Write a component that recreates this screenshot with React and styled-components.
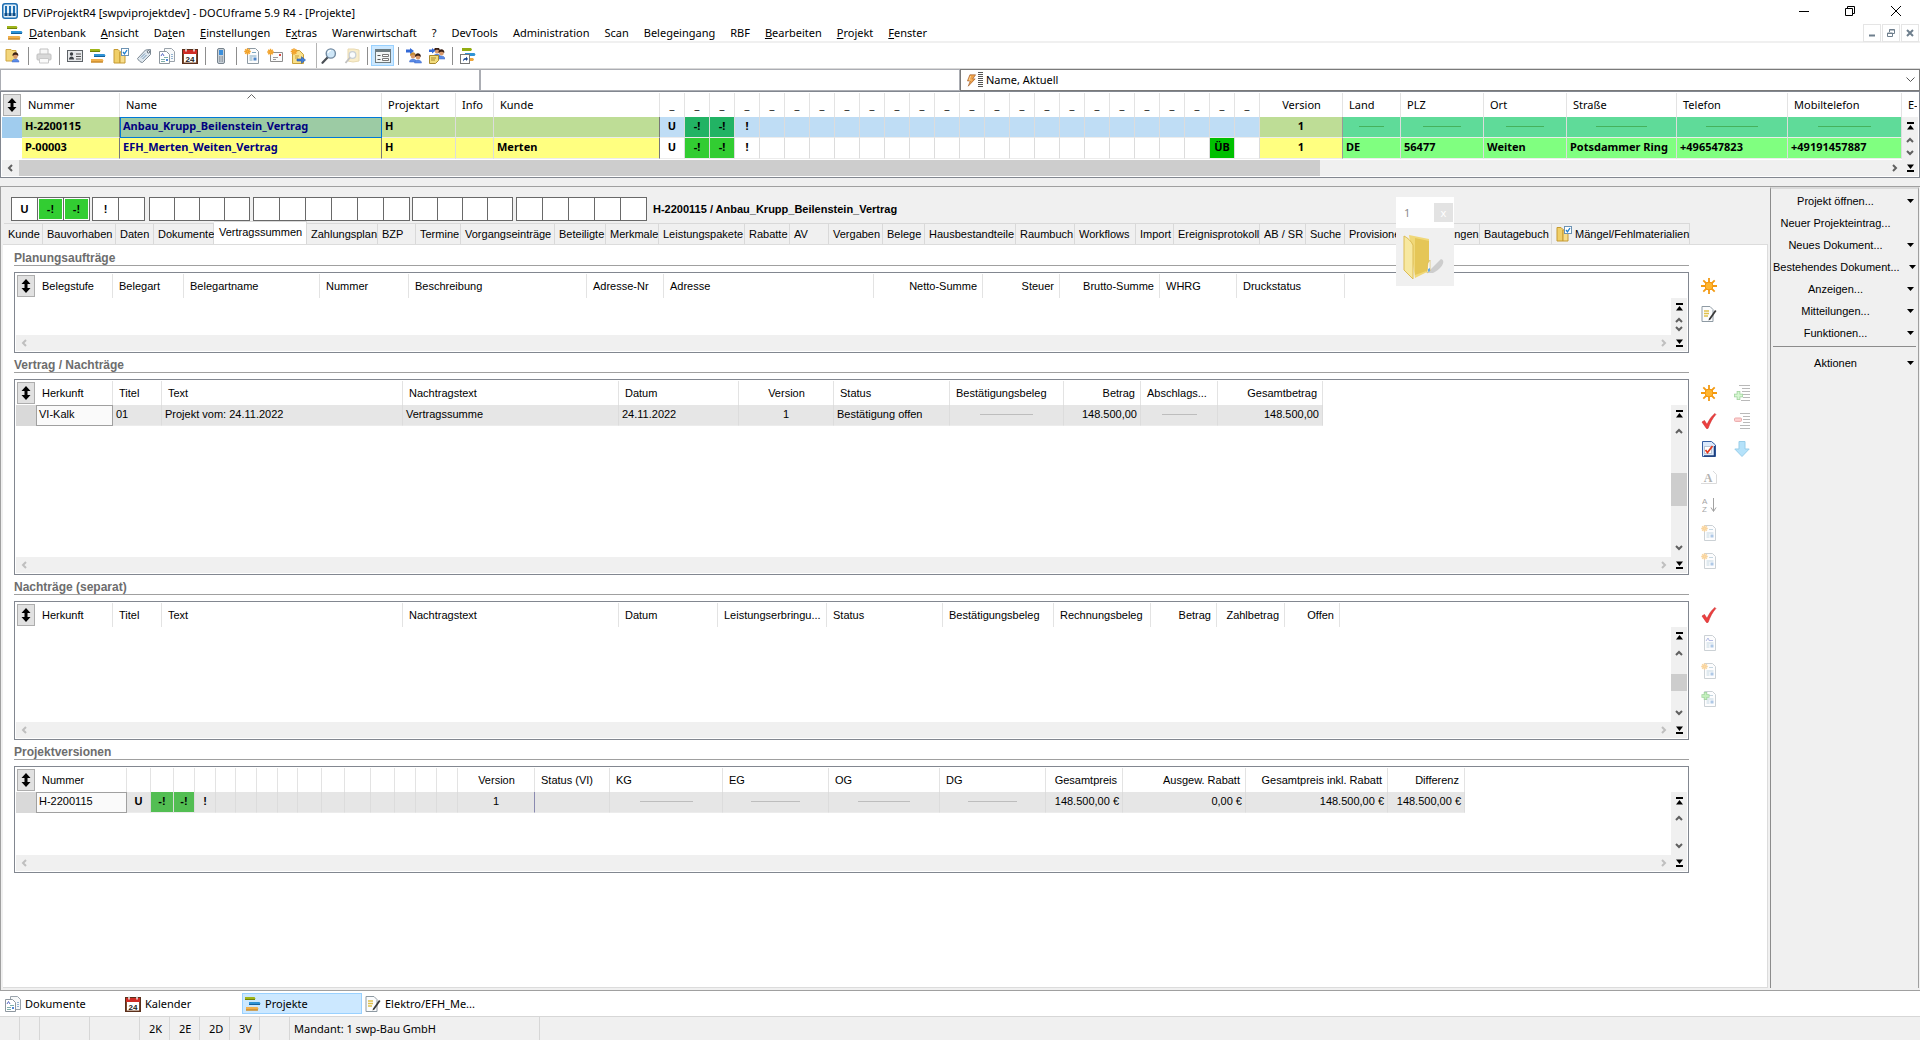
import React from 'react';
import styled, { createGlobalStyle, css } from 'styled-components';

const GlobalStyle = createGlobalStyle`
  * {
    box-sizing: border-box;
  }
  body {
    margin: 0;
    background-color: #f0f0f0;
    color: #000;
    font-family: 'Noto Sans', 'Open Sans', sans-serif;
    font-size: 11px;
    line-height: 16px;
  }
  button,
  input,
  select {
    font: inherit;
    color: inherit;
    margin: 0;
    padding: 0;
    border: none;
    border-radius: 0;
    background: none;
  }
  a {
    color: inherit;
    text-decoration: none;
  }
  svg {
    display: block;
    flex: none;
  }
`;

/* ---------- icons ---------- */

const Svg = ({ size = 16, faded, children }) => (
  <svg
    width={size}
    height={size}
    viewBox='0 0 16 16'
    fill='none'
    opacity={faded ? 0.45 : 1}
    aria-hidden='true'
  >
    {children}
  </svg>
);

const Page = ({ x = 2, y = 0.5, w = 11, h = 15 }) => (
  <path
    d={`M${x} ${y}h${w - 3}l3 3v${h - 3}h-${w}z`}
    fill='#fbfcfd'
    stroke='#8e9aa3'
  />
);

const Burst = ({ x = 4, y = 4, r = 4 }) => (
  <g stroke='#f2a32c' strokeWidth='1.4'>
    <path
      d={`M${x - r} ${y}h${r * 2}M${x} ${y - r}v${r * 2}M${x - r * 0.7} ${
        y - r * 0.7
      }l${r * 1.4} ${r * 1.4}M${x - r * 0.7} ${y + r * 0.7}l${r * 1.4} ${
        -r * 1.4
      }`}
    />
    <circle cx={x} cy={y} r={r * 0.35} fill='#ffc24a' />
  </g>
);

const Person = ({ x, y, hair = '#3a1f14' }) => (
  <g>
    <path
      d={`M${x - 3.5} ${y + 7}c0-4 7-4 7 0z`}
      fill='#5a8be8'
      stroke='#3b67c4'
      strokeWidth='.5'
    />
    <circle cx={x} cy={y + 1} r='2.4' fill='#d99a6c' />
    <path d={`M${x - 3} ${y + 1}c-.5-5 6.5-5 5.8 0-2-1.5-3-2-5.8 0z`} fill={hair} />
  </g>
);

const icons = {
  app: (
    <>
      <rect x='0' y='0' width='16' height='16' rx='3' fill='#1f6fb2' />
      <rect x='1.5' y='1.5' width='13' height='13' rx='1.5' fill='#e3f0f9' />
      <path d='M4 3v8M8 3v8M12 3v8' stroke='#1f6fb2' strokeWidth='2' />
      <path d='M4 10v3M8 10v3M12 10v3' stroke='#0d4c86' strokeWidth='3' />
    </>
  ),
  bars: (
    <>
      <path d='M0 1h9.5l1 1.5-1 1.5H0z' fill='#9fb51a' />
      <path d='M0 3.5h10' stroke='#6f8208' />
      <path d='M4 6h10.500l1 1.500-1 1.500H4z' fill='#2f93d6' />
      <path d='M4 8.500h11' stroke='#12619c' />
      <path d='M1 11h11.500l1 1.500-1 2H1z' fill='#f0b04c' />
      <path d='M1 14h12' stroke='#b97a1c' />
    </>
  ),
  userFolder: (
    <>
      <path d='M1 1.500h5l1 1h4V13H1z' fill='#f3d67c' stroke='#cfa640' />
      <Person x={10.5} y={7} />
    </>
  ),
  printer: (
    <>
      <path d='M4 6V1h8v5' fill='#eee' stroke='#777' />
      <rect x='1' y='6' width='14' height='6' rx='1' fill='#aaa' stroke='#777' />
      <path d='M3.500 10.500h9V15h-9z' fill='#f4f4f4' stroke='#888' />
    </>
  ),
  card: (
    <>
      <rect x='.5' y='2.500' width='15' height='11' fill='#e6e8ea' stroke='#5c6166' />
      <circle cx='4.500' cy='6' r='1.700' fill='#3c4045' />
      <path d='M2 11.500c0-4 5-4 5 0z' fill='#3c4045' />
      <path d='M9 6h5M9 8.500h5M9 11h5' stroke='#555' />
    </>
  ),
  folderCheck: (
    <>
      <path d='M1 1.500h4l2 2V15H1z' fill='#f0cf68' stroke='#c59a32' />
      <path d='M7 4h5v11H7z' fill='#f7dd8c' stroke='#c59a32' />
      <rect x='8.500' y='.5' width='7' height='7' fill='#fff' stroke='#6d93b3' />
      <path d='M10 4l1.500 1.800L14 2' stroke='#1e7fd0' strokeWidth='1.300' />
    </>
  ),
  tag: (
    <>
      <path d='M1.500 10.500l8-8.500 5-.5v5l-8 8c-2 0-4-2-5-4z' fill='#dfe7ee' stroke='#7c8994' />
      <circle cx='12.500' cy='3.800' r='1.200' fill='#fff' stroke='#596672' />
      <path d='M5 9.500l4-4M6.500 11l4-4' stroke='#6f95b5' />
    </>
  ),
  docs: (
    <>
      <path d='M5.500.5h7l3 3v10h-10z' fill='#f7f9fa' stroke='#9aa3ab' />
      <path d='M.5 3.500h7l3 3v9h-10z' fill='#fff' stroke='#8e979f' />
      <path d='M2 8l1.500-2.500L5 8' stroke='#5a6bc4' />
      <path d='M5 9.500h4M2 11.500h4M2 13.500h4' stroke='#7fb0ac' />
      <path d='M7 11h2v2H7z' fill='#4f86d9' />
      <path d='M12 6.500h2M12 8.500h2M12 10.500h2' stroke='#94b4d2' />
    </>
  ),
  calendar: (
    <>
      <rect x='.5' y='1.500' width='15' height='14' fill='#7b4a2d' stroke='#5a2f1b' />
      <rect x='2' y='6' width='12' height='8.500' fill='#fff' />
      <path d='M1 2h14v4H1z' fill='#cf2c25' />
      <path d='M4 0v3.500M12 0v3.500' stroke='#eee' strokeWidth='1.500' />
      <text x='8' y='13.500' textAnchor='middle' fontFamily='Liberation Sans, sans-serif' fontSize='8' fontWeight='700' fill='#222'>
        24
      </text>
    </>
  ),
  phone: (
    <>
      <rect x='4.500' y='.5' width='7' height='15' rx='1.500' fill='#c9d1d8' stroke='#76828c' />
      <rect x='6' y='2' width='4' height='5' fill='#3c8fdc' />
      <path d='M6 9h4M6 11h4M6 13h4' stroke='#6d7780' strokeDasharray='1 .5' />
    </>
  ),
  newDoc: (
    <>
      <Page x={3.5} />
      <path d='M8 4.500h4M5.500 8h7M5.500 10h3M5.500 12h3' stroke='#7fa8c0' />
      <path d='M9.500 9.500h3v3h-3z' fill='#4d86c9' />
      <Burst x={3.5} y={3.5} r={3.3} />
    </>
  ),
  letterDoc: (
    <>
      <Page x={3.5} />
      <path d='M5 6l2-3 1.500 3M8 5.500h4' stroke='#5a6bc4' />
      <path d='M5.500 8h7M5.500 10h3M5.500 12h3' stroke='#7fa8c0' />
      <path d='M9.500 9.500h3v3h-3z' fill='#4d86c9' />
    </>
  ),
  plusDoc: (
    <>
      <Page x={3.5} />
      <path d='M8 4.500h4M5.500 8h7M5.500 10h3M5.500 12h3' stroke='#7fa8c0' />
      <path d='M9.500 9.500h3v3h-3z' fill='#4d86c9' />
      <path d='M4.500 1v8M.5 5h8' stroke='#2f9c2c' strokeWidth='3.400' />
      <path d='M4.500 1.700v6.600M1.200 5h6.600' stroke='#7be06f' strokeWidth='1.800' />
    </>
  ),
  newMail: (
    <>
      <path d='M3.500 4.500h12v9h-12z' fill='#fbfbfb' stroke='#8d8d8d' />
      <path d='M6 9.500h5M6 11.500h3' stroke='#9a9a9a' />
      <path d='M12 6h2v2h-2z' fill='#d9473f' />
      <Burst x={3.5} y={4} r={3.3} />
    </>
  ),
  noteArrow: (
    <>
      <path d='M2.500 2.500h7l4 4v9h-11z' fill='#f9e08a' stroke='#c9a13a' />
      <path d='M5 8h4M5 10h3' stroke='#c9a13a' />
      <path d='M7 11h4.500V8.700L15.500 12l-4 3.300V13H7z' fill='#3f7fd8' stroke='#2356a5' strokeWidth='.6' />
      <Burst x={4} y={3.5} r={3.3} />
    </>
  ),
  magnifier: (
    <>
      <path d='M1.500 14.800l5-5.300' stroke='#4a4f55' strokeWidth='2.200' strokeLinecap='round' />
      <circle cx='9.800' cy='5.500' r='4.600' fill='#cfe7f8' stroke='#7189a0' strokeWidth='1.400' />
      <path d='M7 5a3 3 0 013-2.500' stroke='#fff' strokeWidth='1.200' />
    </>
  ),
  folderSearch: (
    <>
      <path d='M4 1h6l5 1v11l-6 1-5-1z' fill='#f3d98b' stroke='#cfae54' />
      <circle cx='8.500' cy='7' r='3.300' fill='#f5f9fc' stroke='#8a98a5' strokeWidth='1.300' />
      <path d='M6 9.500L1.500 15' stroke='#777' strokeWidth='1.800' />
    </>
  ),
  form: (
    <>
      <rect x='.5' y='1.500' width='15' height='13' fill='#f2f5f5' stroke='#6d7b80' />
      <path d='M1 3h14' stroke='#6d7b80' strokeWidth='2' />
      <path d='M2.500 7.500h3M2.500 11.500h3' stroke='#555' />
      <path d='M7.500 6.500h6v2h-6zM7.500 10.500h6v2h-6z' fill='#fff' stroke='#777' />
    </>
  ),
  usersArrow: (
    <>
      <Person x={7} y={7} hair='#c48b36' />
      <Person x={12} y={8} />
      <path d='M0 1.500h4V0l4 3-4 3V4.500H0z' fill='#3268d6' />
    </>
  ),
  usersNote: (
    <>
      <Person x={8} y={2} />
      <Person x={12.5} y={4} />
      <path d='M.5 7.500h9v5l-3 3h-6z' fill='#f2dc7c' stroke='#a8892e' />
      <path d='M2 10h5M2 12h4' stroke='#a8892e' />
      <path d='M0 1.500h3V0l3.500 2.700L3 5.500V4H0z' fill='#3268d6' />
    </>
  ),
  shortcut: (
    <>
      <path d='M2 0h9l1 1.500-1 1.500H2z' fill='#93ad12' />
      <path d='M5 5h9.500l1 1.500-1 1.500H5z' fill='#2f93d6' />
      <path d='M8 10h5l1 1.500-1 1.500H8z' fill='#eda63c' />
      <rect x='.5' y='6.500' width='9' height='9' fill='#fff' stroke='#777' />
      <path d='M3 13.500c0-2.500 1-3.500 3-3.500V8.500L8 11l-2 2v-1.300c-1.300 0-2.300.3-3 1.800z' fill='#123f8a' />
    </>
  ),
  bolt: (
    <>
      <path d='M6 1h7L9.500 6h3L4 15l2.500-6.500H3z' fill='#f0a24a' stroke='#9c5a2a' strokeWidth='.8' />
      <path d='M7 2.500L5 7.500h3' stroke='#ffe2a8' />
    </>
  ),
  sun: (
    <>
      <path d='M8 0v16M0 8h16M2.300 2.300l11.400 11.400M2.300 13.700L13.700 2.300' stroke='#f39a12' strokeWidth='1.800' />
      <circle cx='8' cy='8' r='4' fill='#ffb52e' stroke='#f08c00' strokeWidth='.8' />
    </>
  ),
  noteEdit: (
    <>
      <Page x={1} w={11} />
      <path d='M3 5h5M3 7.500h5M3 10h4' stroke='#e0c04a' strokeWidth='1.600' />
      <path d='M8 12.500L14 4l1.500 1-6 8.500-2 1z' fill='#3a3a3a' />
    </>
  ),
  check: (
    <path d='M1 9l2.500-1.500L6 11.500C8 7 10.500 3 14 .5l.8 1C11.500 5 9 10 7 15.500H5.500z' fill='#ee3f3f' stroke='#c92a2a' strokeWidth='.6' />
  ),
  docCheck: (
    <>
      <path d='M1.500.5h9l4 3.500v11.500h-13z' fill='#dbe9fb' stroke='#355fa3' />
      <path d='M13.500 5v10H3' stroke='#1d3f7c' strokeWidth='1.500' />
      <rect x='3.500' y='5.500' width='7' height='7' fill='#fff' stroke='#b9c6d6' />
      <path d='M4.500 9l2 2.500L11.500 5' stroke='#e33a1f' strokeWidth='1.700' />
    </>
  ),
  textDoc: (
    <>
      <path d='M0 14.500h15.500v-9L12 2' stroke='#b0b0b0' />
      <text x='7' y='12.500' textAnchor='middle' fontFamily='Liberation Serif, serif' fontSize='12' fontWeight='700' fill='#555'>
        A
      </text>
    </>
  ),
  sort: (
    <>
      <text x='1' y='7' fontFamily='Liberation Sans, sans-serif' fontSize='8' fill='#333'>
        A
      </text>
      <text x='1' y='15' fontFamily='Liberation Sans, sans-serif' fontSize='8' fill='#333'>
        Z
      </text>
      <path d='M12.500 1v13M10 10.500l2.500 4 2.500-4' stroke='#333' />
    </>
  ),
  listPlus: (
    <>
      <path d='M5 .5h11M8 3.500h8M8 6.500h8M9 9.500h7M9 12.500h7M7 15.500h9' stroke='#666' />
      <path d='M4.500 6v9M0 10.500h9' stroke='#2f9c2c' strokeWidth='3.600' />
      <path d='M4.500 6.700v7.600M.7 10.500h7.600' stroke='#a6f09a' strokeWidth='2' />
    </>
  ),
  listMinus: (
    <>
      <path d='M6 .5h10M9 3.500h7M9 6.500h7M9 9.500h7M6 12.500h10M6 15.500h10' stroke='#666' />
      <rect x='.5' y='5' width='7' height='3.400' rx='1' fill='#ff9a9a' stroke='#d24747' />
    </>
  ),
  arrowDown: (
    <path d='M5 .5h6V8h4.200L8 15.500.8 8H5z' fill='#5cc0f5' stroke='#1e93d0' />
  ),
};

const Icon = ({ name, size, faded }) => (
  <Svg size={size} faded={faded}>
    {icons[name]}
  </Svg>
);

const Chevron = ({ dir = 'down', color = '#606060' }) => {
  const paths = {
    up: 'M2 7l3-3 3 3',
    down: 'M2 3l3 3 3-3',
    left: 'M6 2L3 5l3 3',
    right: 'M4 2l3 3-3 3',
  };
  return (
    <svg width='10' height='10' viewBox='0 0 10 10' fill='none' aria-hidden='true'>
      <path d={paths[dir]} stroke={color} strokeWidth='2' />
    </svg>
  );
};

const EdgeArrow = ({ dir }) => (
  <svg width='8' height='8' viewBox='0 0 8 8' aria-hidden='true'>
    {dir === 'up' ? (
      <path d='M1 0h7v2H1zM4.500 3L8 7.500H1z' />
    ) : (
      <path d='M1 6h7v2H1zM4.500 5L1 .5h7z' />
    )}
  </svg>
);

const BigFolder = () => (
  <svg width='44' height='46' viewBox='0 0 44 46' aria-hidden='true'>
    <path d='M24 40l14-14c6 2-1 11-8 14z' fill='#bdbdbd' opacity='.7' />
    <path d='M6 2l20 4v32l-14 7z' fill='#f0d878' />
    <path d='M12 5l14 3v29l-14 5z' fill='#e5c657' />
    <path d='M1 3c4 2 7 5 9 9v34L1 37z' fill='#f7e8a0' stroke='#dcbc55' />
    <path d='M25 30l2-3v11l-3 2z' fill='#fff' stroke='#d3b44c' strokeWidth='.6' />
    <path d='M25 36l2-1v3l-2 1z' fill='#62a9ea' />
  </svg>
);

/* ---------- window frame ---------- */

const Window = styled.div`
  min-height: 100vh;
  display: flex;
  flex-direction: column;
`;

const TitleBar = styled.header`
  display: flex;
  align-items: center;
  height: 24px;
  padding: 0 1px 2px 2px;
  gap: 5px;
  background-color: #fff;
`;

const TitleText = styled.h1`
  flex: 1;
  margin: 0;
  padding-top: 3px;
  font-size: 11px;
  font-weight: 400;
`;

const WindowButtons = styled.div`
  display: flex;
`;

const WindowButton = styled.button`
  width: 46px;
  height: 22px;
  display: flex;
  align-items: center;
  justify-content: center;
`;

const MenuBar = styled.nav`
  display: flex;
  align-items: center;
  height: 19px;
  padding-left: 7px;
  background-color: #fff;
  border-bottom: 2px solid #f0f0f0;
`;

const MenuList = styled.div`
  flex: 1;
  display: flex;
  gap: 15px;
  padding-left: 6px;
`;

const ChildButton = styled.button`
  width: 18px;
  height: 18px;
  margin-right: 1px;
  display: flex;
  align-items: center;
  justify-content: center;
  border: 1px solid #e5e5e5;
`;

const Toolbar = styled.div`
  display: flex;
  align-items: center;
  height: 26px;
  padding-left: 1px;
  background-color: #fff;
  border-bottom: 1px solid #d9d9d9;
`;

const ToolButton = styled.button`
  width: 23px;
  height: 21px;
  display: flex;
  align-items: center;
  justify-content: center;
  ${(props) =>
    props.$active &&
    css`
      background-color: #cce8ff;
      border: 1px solid #99d1ff;
    `}
`;

const ToolSeparator = styled.span`
  width: 8px;
  height: ${(props) => (props.$full ? '25px' : '18px')};
  display: flex;
  justify-content: ${(props) => (props.$full ? 'flex-end' : 'center')};
  &::before {
    content: '';
    border-left: 1px solid ${(props) => (props.$full ? '#b4b4b4' : '#8d8d8d')};
  }
`;

const SearchRow = styled.div`
  display: grid;
  grid-template-columns: 1fr 1fr 2fr;
`;

const SearchInput = styled.input`
  height: 22px;
  min-width: 0;
  padding: 0 4px;
  background-color: #fff;
  border: 1px solid #abadb3;
`;

const SortBox = styled.div`
  display: flex;
  align-items: center;
  height: 22px;
  padding: 0 4px;
  background-color: #fff;
  border: 1px solid #7a7a7a;
  select {
    flex: 1;
    appearance: none;
    outline: none;
    padding-left: 3px;
  }
`;

const Grip = styled.span`
  width: 5px;
  height: 16px;
  background: repeating-linear-gradient(#555 0 1px, #fff 1px 2px);
`;

/* ---------- list grid ---------- */

const GridFrame = styled.div`
  display: grid;
  grid-template-columns: minmax(0, 1fr) 16px;
  grid-template-rows: 24px ${(props) => props.$body}px 16px;
  padding: 1px;
  background-color: #fff;
  border: 1px solid #828790;
`;

const GridTable = styled.table`
  grid-area: 1 / 1 / 3 / 3;
  align-self: start;
  width: 100%;
  table-layout: fixed;
  border-collapse: separate;
  border-spacing: 0;
  font-family: ${(props) =>
    props.$large ? "'Noto Sans', sans-serif" : "'Liberation Sans', sans-serif"};
  font-size: 11px;
`;

const Th = styled.th`
  position: relative;
  height: 24px;
  padding: 0 5px 0 6px;
  overflow: hidden;
  white-space: nowrap;
  font-weight: 400;
  text-align: ${(props) => props.$align || 'left'};
  border-right: 1px solid ${(props) => (props.$bare ? 'transparent' : '#e3e3e3')};
`;

const FlagTh = styled(Th)`
  padding: 0;
  text-align: center;
`;

const SelectorTh = styled.th`
  padding: 0 0 0 1px;
`;

const SelectorButton = styled.button`
  width: 18px;
  height: 22px;
  display: flex;
  align-items: center;
  justify-content: center;
  background-color: #e1e1e1;
  border: 1px solid #adadad;
`;

const SortCaret = styled.svg`
  position: absolute;
  top: 1px;
  left: calc(50% - 4px);
`;

const Td = styled.td`
  height: 21px;
  padding: 0 3px 2px;
  overflow: hidden;
  white-space: nowrap;
  font-weight: ${(props) => (props.$bold ? 700 : 400)};
  text-align: ${(props) => props.$align || 'left'};
  color: ${(props) => props.$color || '#000'};
  background-color: ${(props) => props.$bg || 'transparent'};
  background-clip: padding-box;
  border-right: 1px solid ${(props) => props.$line || '#dcdcdc'};
  border-bottom: 1px solid #ececec;
`;

const FlagTd = styled(Td)`
  padding: 0 0 2px;
`;

const FocusTd = styled(Td)`
  padding: 0 2px 3px;
  border: 1px solid ${(props) => props.$ring};
`;

const MarkerTd = styled.td`
  background-color: ${(props) => props.$bg};
`;

const EmptyLine = styled.hr`
  width: 50%;
  height: 1px;
  margin: 0 auto;
  border: none;
  background-color: ${(props) => props.$color || '#bdbdbd'};
`;

const VBar = styled.div`
  grid-area: 2 / 2 / 4 / 3;
  display: flex;
  flex-direction: column;
  background-color: #f0f0f0;
`;

const ScrollButton = styled.button`
  flex: 0 ${(props) => (props.$shrink ? 1 : 0)} 17px;
  min-height: 0;
  min-width: 0;
  display: flex;
  align-items: center;
  justify-content: center;
`;

const VTrack = styled.div`
  flex: 1 1 0;
  display: flex;
  flex-direction: column;
  justify-content: center;
`;

const VThumb = styled.div`
  height: 33%;
  min-height: 17px;
  background-color: #cdcdcd;
`;

const HBar = styled.div`
  grid-area: 3 / 1 / 4 / 2;
  display: flex;
  background-color: #f0f0f0;
`;

const HTrack = styled.div`
  flex: 1;
  display: grid;
  grid-template-columns: 7fr 3fr;
`;

const HThumb = styled.div`
  margin-right: 5px;
  background-color: #cdcdcd;
`;

const cellOf = (value) =>
  value !== null && typeof value === 'object' ? value : { text: value };

const ListGrid = ({ label, columns, rows = [], body, large, thumb, wide }) => {
  const arrowColor = wide ? '#606060' : '#bfbfbf';
  return (
    <GridFrame $body={body}>
      <GridTable $large={large} aria-label={label}>
        <colgroup>
          <col width='20' />
          {columns.map((col, i) => (
            <col key={i} width={col.width} />
          ))}
          {!wide && <col />}
        </colgroup>
        <thead>
          <tr>
            <SelectorTh>
              <SelectorButton aria-label={`${label}: Spalten`}>
                <svg width='10' height='14' viewBox='0 0 10 14' aria-hidden='true'>
                  <path d='M5 0l4.500 5H6.500v4h3L5 14 .5 9h3V5h-3z' />
                </svg>
              </SelectorButton>
            </SelectorTh>
            {columns.map((col, i) => {
              const Head = col.flag ? FlagTh : Th;
              return (
                <Head key={i} $align={col.align} $bare={!col.width}>
                  {col.label}
                  {col.sorted && (
                    <SortCaret width='9' height='5' viewBox='0 0 9 5' fill='none'>
                      <path d='M.5 4.500l4-4 4 4' stroke='#666' />
                    </SortCaret>
                  )}
                </Head>
              );
            })}
            {!wide && <Th $bare />}
          </tr>
        </thead>
        <tbody>
          {rows.map((row, r) => (
            <tr key={r}>
              <MarkerTd $bg={row.marker} />
              {row.cells.map((value, i) => {
                const cell = cellOf(value);
                const col = columns[i];
                const Cell = cell.ring ? FocusTd : col.flag ? FlagTd : Td;
                return (
                  <Cell
                    key={i}
                    $align={col.flag ? 'center' : col.align}
                    $bg={cell.bg || row.bg}
                    $color={cell.color}
                    $line={cell.line}
                    $ring={cell.ring}
                    $bold={row.bold || cell.bold}
                  >
                    {cell.empty ? <EmptyLine $color={cell.dash} /> : cell.text}
                  </Cell>
                );
              })}
            </tr>
          ))}
        </tbody>
      </GridTable>
      <HBar>
        <ScrollButton aria-label='Nach links'>
          <Chevron dir='left' color={arrowColor} />
        </ScrollButton>
        <HTrack>{wide && <HThumb />}</HTrack>
        <ScrollButton aria-label='Nach rechts'>
          <Chevron dir='right' color={arrowColor} />
        </ScrollButton>
      </HBar>
      <VBar>
        <ScrollButton aria-label='Zum Anfang'>
          <EdgeArrow dir='up' />
        </ScrollButton>
        <ScrollButton $shrink aria-label='Nach oben'>
          <Chevron dir='up' />
        </ScrollButton>
        <VTrack>{thumb && <VThumb />}</VTrack>
        <ScrollButton $shrink aria-label='Nach unten'>
          <Chevron dir='down' />
        </ScrollButton>
        <ScrollButton aria-label='Zum Ende'>
          <EdgeArrow dir='down' />
        </ScrollButton>
      </VBar>
    </GridFrame>
  );
};

/* ---------- detail area ---------- */

const Detail = styled.main`
  position: relative;
  flex: 1;
  display: flex;
  margin-top: 8px;
  padding: 0 1px 2px 2px;
  border-top: 1px solid #a0a0a0;
  border-left: 1px solid #a0a0a0;
  font-family: 'Liberation Sans', sans-serif;
`;

const DetailMain = styled.div`
  flex: 1;
  min-width: 0;
  display: flex;
  flex-direction: column;
`;

const FlagRow = styled.div`
  display: flex;
  align-items: center;
  padding: 10px 0 0 8px;
`;

const FlagGroup = styled.div`
  display: flex;
  margin-right: ${(props) => props.$gap}px;
`;

const FlagBox = styled.span`
  width: ${(props) => props.$size}px;
  height: 24px;
  padding: 1px;
  border: 1px solid #696969;
  background-color: ${(props) => (props.$on ? '#32cd32' : '#fff')};
  box-shadow: inset 0 0 0 1px #fff;
  font-weight: 700;
  line-height: 20px;
  text-align: center;
  & + & {
    margin-left: -1px;
  }
`;

const ProjectTitle = styled.h2`
  margin: 0;
  padding-left: 6px;
  font-size: 11px;
  font-weight: 700;
`;

const TabRow = styled.div`
  display: flex;
  align-items: flex-end;
  height: 23px;
  padding-left: 1px;
`;

const Tab = styled.button`
  flex: none;
  width: ${(props) => props.$width}px;
  height: 21px;
  padding-left: 4px;
  display: flex;
  align-items: center;
  gap: 3px;
  white-space: nowrap;
  border: 1px solid #d9d9d9;
  border-width: 1px 1px 0 0;
  ${(props) =>
    props.$active &&
    css`
      height: 24px;
      padding: 0 0 3px 5px;
      margin-bottom: -1px;
      background-color: #fff;
    `}
`;

const TabPanel = styled.div`
  flex: 1;
  padding: 1px 0 0 11px;
  margin-right: 2px;
  background-color: #fff;
  border: 1px solid #dcdcdc;
  border-left: none;
`;

const SectionTitle = styled.h3`
  height: 20px;
  margin: 0 78px 6px 0;
  padding-top: 5px;
  border-bottom: 1px solid #a0a0a0;
  color: #6d6d6d;
  font-size: 12px;
  font-weight: 700;
  line-height: 15px;
`;

const SectionBody = styled.div`
  display: grid;
  grid-template-columns: minmax(0, 1fr) 78px;
`;

const ActionColumns = styled.div`
  height: 0;
  display: flex;
  padding-left: 3px;
`;

const ActionColumn = styled.div`
  width: 33px;
`;

const ActionButton = styled.button`
  width: 33px;
  height: 28px;
  display: flex;
  align-items: center;
  justify-content: center;
`;

const Section = ({ title, actions = [], ...grid }) => (
  <section>
    <SectionTitle>{title}</SectionTitle>
    <SectionBody>
      <ListGrid label={title} {...grid} />
      <ActionColumns>
        {actions.map((column, c) => (
          <ActionColumn key={c}>
            {column.map(([name, label, faded], i) => (
              <ActionButton key={i} aria-label={label} disabled={faded}>
                <Icon name={name} faded={faded} />
              </ActionButton>
            ))}
          </ActionColumn>
        ))}
      </ActionColumns>
    </SectionBody>
  </section>
);

const Sidebar = styled.aside`
  width: 149px;
  padding: 1px 2px 0;
  border-left: 1px solid #8c8c8c;
  border-top: 2px solid #dadada;
  border-right: 1px solid #a0a0a0;
`;

const SideButton = styled.button`
  width: 100%;
  height: 22px;
  display: flex;
  align-items: center;
  span {
    flex: 1;
    text-align: center;
    white-space: nowrap;
  }
  svg {
    margin: 0 2px 0 9px;
    visibility: ${(props) => (props.$plain ? 'hidden' : 'visible')};
  }
`;

const SideRule = styled.hr`
  height: 1px;
  margin: 2px 0 5px;
  border: none;
  background-color: #8c8c8c;
`;

const FloatingClip = styled.div`
  position: absolute;
  top: 10px;
  right: 466px;
  width: 58px;
  height: 89px;
  background-color: #f0f0f0;
`;

const ClipHead = styled.div`
  display: flex;
  align-items: center;
  justify-content: space-between;
  height: 31px;
  padding: 0 1px 0 8px;
  background-color: #fff;
  color: #8c8c8c;
  font-family: 'Noto Sans', sans-serif;
  button {
    width: 19px;
    height: 19px;
    background-color: #e3e3e3;
    color: #fff;
    line-height: 16px;
  }
`;

const ClipBody = styled.div`
  padding: 5px 0 0 7px;
`;

/* ---------- bottom ---------- */

const TaskBar = styled.nav`
  display: flex;
  height: 26px;
  padding: 2px;
  background-color: #fff;
  border-top: 1px solid #a0a0a0;
`;

const TaskTab = styled.a`
  width: 120px;
  height: 21px;
  display: flex;
  align-items: center;
  gap: 4px;
  padding-left: 2px;
  border: 1px solid ${(props) => (props.$active ? '#99d1ff' : 'transparent')};
  background-color: ${(props) => (props.$active ? '#cce8ff' : 'transparent')};
`;

const StatusBar = styled.footer`
  display: flex;
  height: 24px;
  border-top: 1px solid #d7d7d7;
`;

const StatusCell = styled.span`
  width: ${(props) => props.$width}px;
  padding-left: ${(props) => (props.$wide ? 4 : 9)}px;
  border-right: 1px solid #d7d7d7;
  line-height: 24px;
`;

/* ---------- data ---------- */

const menu = [
  ['D', 'atenbank'],
  ['A', 'nsicht'],
  ['t', 'en', 'Da'],
  ['E', 'instellungen'],
  ['x', 'tras', 'E'],
  ['', 'Warenwirtschaft'],
  ['', '?'],
  ['', 'DevTools'],
  ['', 'Administration'],
  ['', 'Scan'],
  ['', 'Belegeingang'],
  ['', 'RBF'],
  ['B', 'earbeiten'],
  ['P', 'rojekt'],
  ['F', 'enster'],
];

const tools = [
  ['userFolder', 'Adressen'],
  '|',
  ['printer', 'Drucken', true],
  '|',
  ['card', 'Kontakte'],
  ['bars', 'Projekte'],
  ['folderCheck', 'Aufgaben'],
  ['tag', 'Artikel'],
  ['docs', 'Dokumente'],
  ['calendar', 'Kalender'],
  '|',
  ['phone', 'Telefon'],
  '|',
  ['newDoc', 'Neues Dokument'],
  ['newMail', 'Neue E-Mail'],
  ['noteArrow', 'Neue Notiz'],
  '||',
  ['magnifier', 'Suchen'],
  ['folderSearch', 'Ordner durchsuchen', true],
  '|',
  ['form', 'Detailansicht', false, true],
  '|',
  ['usersArrow', 'Weiterleiten'],
  ['usersNote', 'Notiz weiterleiten'],
  '|',
  ['shortcut', 'Verknüpfung'],
];

const col = (label, width, align) => ({ label, width, align });
const flag = (label, width) => ({ label, width, flag: true });

const projectColumns = [
  col('Nummer', 98),
  { ...col('Name', 262), sorted: true },
  col('Projektart', 74),
  col('Info', 38),
  col('Kunde', 166),
  ...Array.from({ length: 24 }, () => flag('_', 25)),
  col('Version', 83, 'center'),
  col('Land', 58),
  col('PLZ', 83),
  col('Ort', 83),
  col('Straße', 110),
  col('Telefon', 111),
  col('Mobiltelefon', 114),
  col('E-'),
];

const olive = '#bedd96';
const sky = '#bfddf5';
const yellow = '#ffff80';
const lime = '#80ff80';
const mint = { empty: true, bg: '#5fdb99', dash: '#45b25c' };

const blanks = (count, cell) => Array.from({ length: count }, () => cell);

const projectRows = [
  {
    marker: '#a0ccee',
    bold: true,
    cells: [
      { text: 'H-2200115', bg: olive, line: '#777' },
      { text: 'Anbau_Krupp_Beilenstein_Vertrag', bg: '#9ccba4', ring: '#0078d7', color: '#000080' },
      { text: 'H', bg: olive },
      { bg: olive },
      { bg: olive, line: '#777' },
      { text: 'U', bg: sky },
      { text: '-!', bg: '#22b364' },
      { text: '-!', bg: '#22b364' },
      { text: '!', bg: sky },
      ...blanks(20, { bg: sky }),
      { text: '1', bg: olive, line: '#999' },
      ...blanks(6, mint),
      {},
    ],
  },
  {
    bold: true,
    cells: [
      { text: 'P-00003', bg: yellow, line: '#777' },
      { text: 'EFH_Merten_Weiten_Vertrag', bg: yellow, color: '#000080', line: '#777' },
      { text: 'H', bg: yellow },
      { bg: yellow },
      { text: 'Merten', bg: yellow, line: '#777' },
      { text: 'U' },
      { text: '-!', bg: '#32cd32' },
      { text: '-!', bg: '#32cd32' },
      { text: '!' },
      ...blanks(18, {}),
      { text: 'ÜB', bg: '#00c000' },
      {},
      { text: '1', bg: yellow, line: '#999' },
      { text: 'DE', bg: lime },
      { text: '56477', bg: lime },
      { text: 'Weiten', bg: lime },
      { text: 'Potsdammer Ring', bg: lime },
      { text: '+496547823', bg: lime },
      { text: '+49191457887', bg: lime },
      {},
    ],
  },
];

const orderColumns = [
  col('Belegstufe', 77),
  col('Belegart', 71),
  col('Belegartname', 136),
  col('Nummer', 89),
  col('Beschreibung', 178),
  col('Adresse-Nr', 77),
  col('Adresse', 210),
  col('Netto-Summe', 109, 'right'),
  col('Steuer', 77, 'right'),
  col('Brutto-Summe', 100, 'right'),
  col('WHRG', 77),
  col('Druckstatus', 108),
];

const contractColumns = [
  col('Herkunft', 77),
  col('Titel', 49),
  col('Text', 241),
  col('Nachtragstext', 216),
  col('Datum', 120),
  col('Version', 95, 'center'),
  col('Status', 116),
  col('Bestätigungsbeleg', 114),
  col('Betrag', 77, 'right'),
  col('Abschlags...', 77),
  col('Gesamtbetrag', 105, 'right'),
];

const contractRows = [
  {
    marker: '#d9d9d9',
    bg: '#e6e6e6',
    cells: [
      { text: 'VI-Kalk', bg: '#fafafa', ring: '#a0a0a0' },
      '01',
      'Projekt vom: 24.11.2022',
      'Vertragssumme',
      '24.11.2022',
      '1',
      'Bestätigung offen',
      { empty: true },
      '148.500,00',
      { empty: true },
      '148.500,00',
    ],
  },
];

const supplementColumns = [
  ...contractColumns.slice(0, 4),
  col('Datum', 99),
  col('Leistungserbringu...', 109),
  col('Status', 116),
  col('Bestätigungsbeleg', 111),
  col('Rechnungsbeleg', 97),
  col('Betrag', 66, 'right'),
  col('Zahlbetrag', 68, 'right'),
  col('Offen', 55, 'right'),
];

const versionColumns = [
  col('Nummer', 91),
  ...[24, 23, 21, 21, 20, 21, 21, 20, 24, 23, 26, 24, 21, 21, 21].map((width) =>
    flag('', width)
  ),
  col('Version', 77, 'center'),
  col('Status (VI)', 75),
  col('KG', 113),
  col('EG', 106),
  col('OG', 111),
  col('DG', 106),
  col('Gesamtpreis', 77, 'right'),
  col('Ausgew. Rabatt', 123, 'right'),
  col('Gesamtpreis inkl. Rabatt', 142, 'right'),
  col('Differenz', 77, 'right'),
];

const versionRows = [
  {
    marker: '#d9d9d9',
    bg: '#e6e6e6',
    cells: [
      { text: 'H-2200115', bg: '#fafafa', ring: '#a0a0a0' },
      { text: 'U', bold: true },
      { text: '-!', bold: true, bg: '#53be53' },
      { text: '-!', bold: true, bg: '#53be53' },
      { text: '!', bold: true },
      ...blanks(11, {}),
      { text: '1', line: '#8a8ab0' },
      {},
      ...blanks(4, { empty: true }),
      '148.500,00 €',
      '0,00 €',
      '148.500,00 €',
      '148.500,00 €',
    ],
  },
];

const contractActions = [
  [
    ['sun', 'Neu'],
    ['check', 'Bestätigen'],
    ['docCheck', 'Beleg bestätigen'],
    ['textDoc', 'Text', true],
    ['sort', 'Sortieren', true],
    ['newDoc', 'Neuer Beleg', true],
    ['newDoc', 'Neuer Abschlag', true],
  ],
  [
    ['listPlus', 'Zeile einfügen', true],
    ['listMinus', 'Zeile entfernen', true],
    ['arrowDown', 'Nach unten verschieben', true],
  ],
];

const flagGroups = [
  { size: 27, gap: 2, flags: ['U', '-!', '-!'] },
  { size: 27, gap: 4, flags: ['!', ''] },
  { size: 26, gap: 3, flags: ['', '', '', ''] },
  { size: 27, gap: 2, flags: ['', '', '', '', '', ''] },
  { size: 26, gap: 3, flags: ['', '', '', ''] },
  { size: 27, gap: 0, flags: ['', '', '', '', ''] },
];

const tabs = [
  ['Kunde', 39],
  ['Bauvorhaben', 73],
  ['Daten', 38],
  ['Dokumente', 60],
  ['Vertragssummen', 93],
  ['Zahlungsplan', 71],
  ['BZP', 38],
  ['Termine', 45],
  ['Vorgangseinträge', 94],
  ['Beteiligte', 51],
  ['Merkmale', 53],
  ['Leistungspakete', 86],
  ['Rabatte', 45],
  ['AV', 39],
  ['Vergaben', 54],
  ['Belege', 42],
  ['Hausbestandteile', 91],
  ['Raumbuch', 59],
  ['Workflows', 61],
  ['Import', 38],
  ['Ereignisprotokoll', 86],
  ['AB / SR', 46],
  ['Suche', 39],
  ['Provisionen', 74],
  ['Buchungen', 61],
  ['Bautagebuch', 72],
  ['Mängel/Fehlmaterialien', 138, 'folderCheck'],
];

const sideItems = [
  ['Projekt öffnen...'],
  ['Neuer Projekteintrag...', true],
  ['Neues Dokument...'],
  ['Bestehendes Dokument...'],
  ['Anzeigen...'],
  ['Mitteilungen...'],
  ['Funktionen...'],
];

const tasks = [
  ['docs', 'Dokumente'],
  ['calendar', 'Kalender'],
  ['bars', 'Projekte'],
  ['noteEdit', 'Elektro/EFH_Me...'],
];

const statusCells = [
  ['', 20],
  ['', 20],
  ['', 50],
  ['', 50],
  ['2K', 30],
  ['2E', 30],
  ['2D', 30],
  ['3V', 30],
  ['', 30],
  ['Mandant: 1 swp-Bau GmbH', 250],
];

const SideEntry = ({ label, plain }) => (
  <SideButton $plain={plain}>
    <span>{label}</span>
    <svg width='7' height='4' viewBox='0 0 7 4' aria-hidden='true'>
      <path d='M0 0h7L3.500 4z' />
    </svg>
  </SideButton>
);

export default function App() {
  return (
    <Window>
      <GlobalStyle />
      <TitleBar>
        <Icon name='app' size={16} />
        <TitleText>
          DFViProjektR4 [swpviprojektdev] - DOCUframe 5.9 R4 - [Projekte]
        </TitleText>
        <WindowButtons>
          <WindowButton aria-label='Minimieren'>
            <svg width='10' height='10' viewBox='0 0 10 10'>
              <path d='M0 5.500h10' stroke='#000' />
            </svg>
          </WindowButton>
          <WindowButton aria-label='Wiederherstellen'>
            <svg width='10' height='10' viewBox='0 0 10 10' fill='none' stroke='#000'>
              <path d='M.5 2.500h7v7h-7zM2.500 2.500v-2h7v7h-2' />
            </svg>
          </WindowButton>
          <WindowButton aria-label='Schließen'>
            <svg width='10' height='10' viewBox='0 0 10 10' stroke='#000'>
              <path d='M0 0l10 10M10 0L0 10' />
            </svg>
          </WindowButton>
        </WindowButtons>
      </TitleBar>

      <MenuBar>
        <Icon name='bars' />
        <MenuList>
          {menu.map(([key, rest, before]) => (
            <a href='#menu' key={rest}>
              {before}
              {key && <u>{key}</u>}
              {rest}
            </a>
          ))}
        </MenuList>
        <ChildButton aria-label='Fenster minimieren'>
          <svg width='8' height='8' viewBox='0 0 8 8'>
            <path d='M1 6.500h6' stroke='#6e7f8d' strokeWidth='2' />
          </svg>
        </ChildButton>
        <ChildButton aria-label='Fenster wiederherstellen'>
          <svg width='8' height='8' viewBox='0 0 8 8' fill='none' stroke='#6e7f8d'>
            <path d='M.5 4h5v3.500h-5zM.5 4.500h5M2.500 3V.5h5v4h-2M2.500 1h5' />
          </svg>
        </ChildButton>
        <ChildButton aria-label='Fenster schließen'>
          <svg width='8' height='8' viewBox='0 0 8 8' stroke='#6e7f8d'>
            <path d='M1 1l6 6M7 1L1 7' strokeWidth='2' />
          </svg>
        </ChildButton>
      </MenuBar>

      <Toolbar>
        {tools.map((tool, i) =>
          typeof tool === 'string' ? (
            <ToolSeparator key={i} $full={tool === '||'} />
          ) : (
            <ToolButton key={i} aria-label={tool[1]} disabled={tool[2]} $active={tool[3]}>
              <Icon name={tool[0]} faded={tool[2]} />
            </ToolButton>
          )
        )}
      </Toolbar>

      <SearchRow>
        <SearchInput aria-label='Suche Nummer' />
        <SearchInput aria-label='Suche Name' />
        <SortBox>
          <Icon name='bolt' size={13} />
          <Grip />
          <select aria-label='Sortierung'>
            <option>Name, Aktuell</option>
          </select>
          <svg width='9' height='6' viewBox='0 0 9 6' fill='none' aria-hidden='true'>
            <path d='M.5.5l4 4 4-4' stroke='#555' />
          </svg>
        </SortBox>
      </SearchRow>

      <ListGrid label='Projekte' columns={projectColumns} rows={projectRows} body={43} large wide />

      <Detail>
        <DetailMain>
          <FlagRow>
            {flagGroups.map((group, g) => (
              <FlagGroup key={g} $gap={group.gap}>
                {group.flags.map((text, i) => (
                  <FlagBox key={i} $size={group.size} $on={text === '-!'}>
                    {text}
                  </FlagBox>
                ))}
              </FlagGroup>
            ))}
            <ProjectTitle>H-2200115 / Anbau_Krupp_Beilenstein_Vertrag</ProjectTitle>
          </FlagRow>
          <TabRow role='tablist'>
            {tabs.map(([label, width, icon]) => (
              <Tab
                key={label}
                role='tab'
                $width={width}
                $active={label === 'Vertragssummen'}
                aria-selected={label === 'Vertragssummen'}
              >
                {icon && <Icon name={icon} />}
                {label}
              </Tab>
            ))}
          </TabRow>
          <TabPanel>
            <Section
              title='Planungsaufträge'
              columns={orderColumns}
              body={37}
              actions={[
                [
                  ['sun', 'Neu'],
                  ['noteEdit', 'Bearbeiten'],
                ],
              ]}
            />
            <Section
              title='Vertrag / Nachträge'
              columns={contractColumns}
              rows={contractRows}
              body={152}
              thumb
              actions={contractActions}
            />
            <Section
              title='Nachträge (separat)'
              columns={supplementColumns}
              body={95}
              thumb
              actions={[
                [
                  ['check', 'Bestätigen'],
                  ['letterDoc', 'Beleg', true],
                  ['newDoc', 'Neuer Beleg', true],
                  ['plusDoc', 'Beleg hinzufügen', true],
                ],
              ]}
            />
            <Section
              title='Projektversionen'
              columns={versionColumns}
              rows={versionRows}
              body={63}
            />
          </TabPanel>
        </DetailMain>
        <Sidebar>
          {sideItems.map(([label, plain]) => (
            <SideEntry key={label} label={label} plain={plain} />
          ))}
          <SideRule />
          <SideEntry label='Aktionen' />
        </Sidebar>
        <FloatingClip>
          <ClipHead>
            1<button aria-label='Ablage schließen'>x</button>
          </ClipHead>
          <ClipBody>
            <BigFolder />
          </ClipBody>
        </FloatingClip>
      </Detail>

      <TaskBar>
        {tasks.map(([icon, label]) => (
          <TaskTab href='#task' key={label} $active={label === 'Projekte'}>
            <Icon name={icon} />
            {label}
          </TaskTab>
        ))}
      </TaskBar>
      <StatusBar>
        {statusCells.map(([text, width], i) => (
          <StatusCell key={i} $width={width} $wide={width > 100}>
            {text}
          </StatusCell>
        ))}
      </StatusBar>
    </Window>
  );
}
